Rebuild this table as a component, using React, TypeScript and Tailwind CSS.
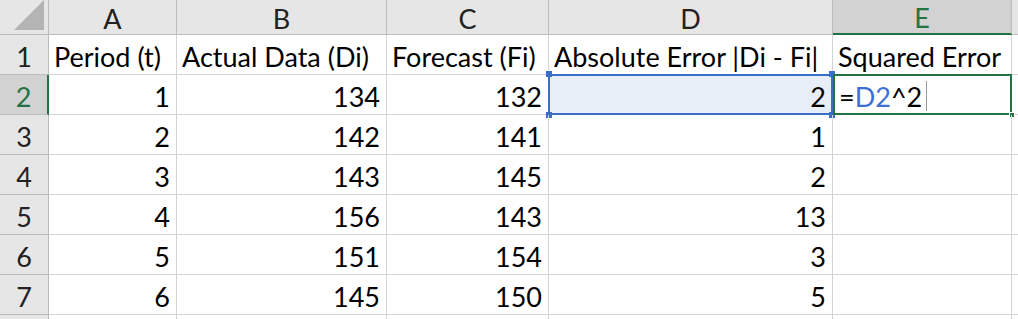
import React from 'react';

const cols = ['A', 'B', 'C', 'D', 'E'];

const headers = ['Period (t)', 'Actual Data (Di)', 'Forecast (Fi)', 'Absolute Error |Di - Fi|', 'Squared Error'];

const rows = [
  [1, 134, 132, 2],
  [2, 142, 141, 1],
  [3, 143, 145, 2],
  [4, 156, 143, 13],
  [5, 151, 154, 3],
  [6, 145, 150, 5],
];

const font = { fontFamily: 'Lato, "Noto Sans", sans-serif' };

const Handle: React.FC<{ className: string }> = ({ className }) => (
  <div className={`absolute w-[6px] h-[6px] ${className}`} />
);

const App: React.FC = () => {
  return (
    <div
      className="w-[1018px] h-[319px] overflow-hidden bg-white text-black text-[27px] leading-none"
      style={font}
    >
      <div className="grid grid-cols-[49px_128px_210px_162px_284px_179px_6px] grid-rows-[35px_repeat(7,40px)_4px]">
        {/* corner */}
        <div className="relative bg-[#e6e6e6] border-r border-b border-[#bcbcbc]">
          <svg className="absolute right-[4px] bottom-[4px]" width="30" height="30" viewBox="0 0 30 30">
            <polygon points="30,0 30,30 0,30" fill="#b4b4b4" />
          </svg>
        </div>
        {cols.map((c) => (
          <div
            key={c}
            className={`flex items-center justify-center pt-[2px] border-r border-[#bcbcbc] ${
              c === 'E'
                ? 'bg-[#d2d2d2] text-[#217346] border-b-2 border-b-[#217346]'
                : 'bg-[#e6e6e6] text-[#222] border-b border-b-[#bcbcbc]'
            }`}
          >
            {c}
          </div>
        ))}
        <div className="bg-[#e6e6e6] border-b border-[#bcbcbc]" />

        {/* row 1 */}
        <div className="flex items-center justify-center pt-[3px] bg-[#e6e6e6] border-r border-b border-[#bcbcbc] text-[#222]">
          1
        </div>
        {headers.map((h) => (
          <div key={h} className="flex items-center pl-[5px] pt-[3px] whitespace-nowrap border-r border-b border-[#d4d4d4]">
            {h}
          </div>
        ))}
        <div className="border-b border-[#d4d4d4]" />

        {rows.map((r, i) => {
          const n = i + 2;
          const active = n === 2;
          return (
            <React.Fragment key={n}>
              <div
                className={`flex items-center justify-center pt-[3px] border-b border-[#bcbcbc] ${
                  active
                    ? 'bg-[#d2d2d2] text-[#217346] border-r-2 border-r-[#217346]'
                    : 'bg-[#e6e6e6] text-[#222] border-r border-r-[#bcbcbc]'
                }`}
              >
                {n}
              </div>
              {r.map((v, j) => (
                <div
                  key={j}
                  className={`relative flex items-center justify-end pr-[6px] pt-[3px] border-r border-b border-[#d4d4d4] ${
                    active && j === 3 ? 'bg-[#e8eef8]' : ''
                  }`}
                >
                  {v}
                  {active && j === 3 && (
                    <>
                      <div className="absolute left-[-1px] top-[-1px] right-[-1px] bottom-[-1px] border-2 border-[#3a6ec8]" />
                      <Handle className="bg-[#3a6ec8] left-[-3px] top-[-4px]" />
                      <Handle className="bg-[#3a6ec8] left-[-3px] bottom-[-4px]" />
                      <Handle className="bg-[#3a6ec8] right-[-3px] top-[-4px]" />
                      <Handle className="bg-[#3a6ec8] right-[-3px] bottom-[-4px]" />
                    </>
                  )}
                </div>
              ))}
              <div className="relative flex items-center pl-[6px] pt-[3px] border-r border-b border-[#d4d4d4]">
                {active && (
                  <>
                    <span>=</span>
                    <span className="text-[#3d6fd6]">D2</span>
                    <span>^2</span>
                    <span className="ml-[4px] w-px h-[30px] bg-[#9a9a9a]" />
                    <div className="absolute left-0 top-[-1px] right-[-1px] bottom-[-1px] border-2 border-[#217346]" />
                    <div className="absolute right-[-4px] bottom-[-4px] w-[6px] h-[6px] bg-[#217346] border border-white" />
                  </>
                )}
              </div>
              <div className="border-b border-[#d4d4d4]" />
            </React.Fragment>
          );
        })}

        {/* row 8 partial */}
        <div className="bg-[#e6e6e6] border-r border-[#bcbcbc]" />
        {cols.map((c) => (
          <div key={c} className="border-r border-[#d4d4d4]" />
        ))}
        <div />
      </div>
    </div>
  );
};

export default App;
